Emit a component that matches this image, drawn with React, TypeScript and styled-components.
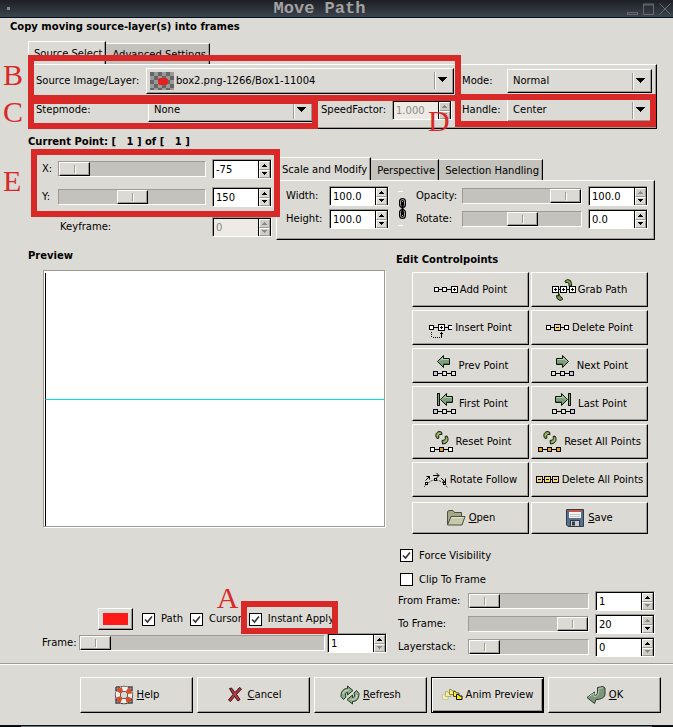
import React, { useId } from "react";
import styled, { createGlobalStyle, css } from "styled-components";

const face = "#dcdad5";
const shade = "#9d9b93";
const trough = "#c4c2bd";
const marker = "#d92828";

const GlobalStyle = createGlobalStyle`
  * { box-sizing: border-box; }
  body { margin: 0; background: ${face}; }
  body, button, input, select {
    font-family: "DejaVu Sans", sans-serif;
    font-size: 10px;
    line-height: 12px;
    color: #000;
  }
`;

const bevel = css`
  border: 1px solid;
  border-color: #fff #000 #000 #fff;
  box-shadow: inset -1px -1px 0 ${shade};
`;

/* ---------- window frame ---------- */

const Dialog = styled.main`
  display: flex;
  flex-direction: column;
  background: ${face};
  overflow: hidden;
`;

const TitleBar = styled.header`
  display: grid;
  grid-template-columns: 18px 1fr 52px;
  align-items: center;
  height: 18px;
  background: linear-gradient(#1e1f24, #3b444f);
  border-bottom: 1px solid #06131f;
`;

const TitleDot = styled.span`
  width: 3px;
  height: 3px;
  margin-left: 7px;
  background: #8a8a8a;
`;

const Title = styled.h1`
  margin: 0;
  font: bold 17px/17px "Liberation Mono", monospace;
  text-align: center;
  color: #a2a2a2;
`;

const TitleButtons = styled.div`
  display: flex;
  gap: 4px;
  padding-left: 6px;
`;

const TitleButton = styled.button`
  display: flex;
  padding: 0;
  border: 0;
  background: none;
`;

const FooterEdge = styled.div`
  height: 2px;
  background: linear-gradient(90deg, #06080c 21px, #6b7075 21px, #6b7075 calc(100% - 21px), #06080c calc(100% - 21px));
  border-top: 1px solid #06131f;
`;

const Heading = styled.h2<{ $top?: number; $left?: number }>`
  margin: ${(p) => p.$top ?? 0}px 0 0 ${(p) => p.$left ?? 0}px;
  font-size: 10px;
  line-height: 12px;
  font-weight: bold;
  white-space: pre;
`;

/* ---------- notebook ---------- */

const Tabs = styled.div`
  display: flex;
  align-items: flex-end;
`;

const Tab = styled.button<{ $active?: boolean }>`
  height: ${(p) => (p.$active ? 23 : 21)}px;
  padding: 1px 3px 0 5px;
  border: 1px solid;
  border-color: #fff #000 ${(p) => (p.$active ? face : "#fff")} ${(p) => (p.$active ? "#fff" : trough)};
  border-bottom: 0;
  background: ${(p) => (p.$active ? face : trough)};
  box-shadow: inset -1px 0 0 ${shade};
  white-space: nowrap;
`;

const SourceBook = styled.section`
  margin: 8px 16px 0 28px;
`;

const SourcePage = styled.div`
  ${bevel}
  display: flex;
  flex-direction: column;
  gap: 4px;
  padding: 3px 4px 6px 7px;
`;

const SourceRow = styled.div`
  display: flex;
  gap: 8px;
`;

const SourceMain = styled.div<{ $end?: number }>`
  position: relative;
  display: flex;
  align-items: center;
  gap: 8px;
  flex: 1 1 418px;
  min-width: 0;
  padding-right: ${(p) => p.$end ?? 0}px;
`;

const SourceSide = styled.div`
  position: relative;
  display: flex;
  align-items: center;
  flex: 1 1 190px;
  min-width: 0;
`;

const Field = styled.div`
  position: relative;
  display: flex;
  align-items: center;
  flex: 1;
`;

const Label = styled.label<{ $width?: number; $indent?: number }>`
  flex: none;
  width: ${(p) => (p.$width ? `${p.$width}px` : "auto")};
  padding-left: ${(p) => p.$indent ?? 0}px;
  white-space: nowrap;
`;

/* ---------- drop-down ---------- */

const ComboBox = styled.div`
  position: relative;
  flex: 1;
  min-width: 0;
  display: flex;
`;

const ComboSelect = styled.select<{ $picture?: boolean; $tall?: boolean }>`
  ${bevel}
  appearance: none;
  width: 100%;
  height: ${(p) => (p.$tall ? 26 : 24)}px;
  padding: 0 24px 0 ${(p) => (p.$picture ? 29 : 5)}px;
  border-radius: 0;
  background: ${face};
`;

const ComboArrow = styled.svg`
  position: absolute;
  right: 4px;
  top: 4px;
  pointer-events: none;
`;

const ComboPicture = styled.svg`
  position: absolute;
  left: 4px;
  top: 4px;
  pointer-events: none;
`;

/* ---------- number box ---------- */

const SpinFrame = styled.div`
  display: grid;
  grid-template-columns: 1fr 13px;
  flex: none;
  width: 60px;
  height: 20px;
  border: 1px solid;
  border-color: ${shade} #fff #fff ${shade};
`;

const SpinInput = styled.input`
  min-width: 0;
  width: 100%;
  padding: 0 2px;
  border: solid #000;
  border-width: 1px 0 0 1px;
  border-radius: 0;
  background: #fff;
  &:disabled { background: #eeebe7; color: #8b8983; }
`;

const SpinButtons = styled.div`
  display: grid;
  grid-template-rows: 1fr 1fr;
  border: solid #000;
  border-width: 1px 1px 0 1px;
`;

const SpinButton = styled.button`
  display: flex;
  align-items: center;
  justify-content: center;
  min-height: 0;
  padding: 0;
  border: 1px solid;
  border-color: #fff ${shade} ${shade} #fff;
  background: ${face};
  color: #000;
  &:disabled { color: #8b8983; background: #cfcdc8; }
`;

/* ---------- slider ---------- */

const Slider = styled.input.attrs({ type: "range" })`
  appearance: none;
  flex: 1;
  min-width: 0;
  height: 16px;
  margin: 0;
  border: 1px solid;
  border-color: ${shade} #fff #fff ${shade};
  background: ${trough};
  &::-webkit-slider-thumb {
    ${bevel}
    appearance: none;
    width: 31px;
    height: 14px;
    background:
      linear-gradient(${shade}, ${shade}) 14px 2px / 1px 8px no-repeat,
      linear-gradient(#fff, #fff) 15px 3px / 1px 8px no-repeat,
      ${face};
  }
`;

/* ---------- tick box ---------- */

const CheckLabel = styled.label`
  position: relative;
  display: flex;
  align-items: center;
  gap: 6px;
  height: 13px;
  white-space: nowrap;
`;

const CheckInput = styled.input.attrs({ type: "checkbox" })`
  appearance: none;
  width: 13px;
  height: 13px;
  margin: 0;
  border: 1px solid #000;
  background: #fff;
  &:checked {
    background: #fff url("data:image/svg+xml,%3Csvg xmlns='http://www.w3.org/2000/svg' width='11' height='11'%3E%3Cpath d='M2 5.5 4.5 8 9 2.5' fill='none' stroke='%23333' stroke-width='1.6'/%3E%3C/svg%3E") center no-repeat;
  }
`;

/* ---------- current point ---------- */

const PointRow = styled.section`
  display: flex;
  align-items: flex-start;
  gap: 4px;
  margin: 9px 18px 0 42px;
`;

const PointFields = styled.div`
  display: flex;
  flex-direction: column;
  gap: 10px;
  flex: 1 1 230px;
  min-width: 0;
  padding-top: 2px;
`;

const PositionFields = styled.div`
  position: relative;
  display: flex;
  flex-direction: column;
  gap: 8px;
`;

const Line = styled.div<{ $gap?: number }>`
  display: flex;
  align-items: center;
  gap: ${(p) => p.$gap ?? 6}px;
`;

const SpreadLine = styled(Line)`
  justify-content: space-between;
`;

const LabelledSlider = styled.div`
  display: flex;
  align-items: center;
  flex: 1;
  min-width: 0;
`;

const ModifyBook = styled.section`
  flex: 1 1 379px;
  min-width: 0;
`;

const ModifyPage = styled.div`
  ${bevel}
  display: flex;
  padding: 5px 6px 10px 9px;
`;

const Stack = styled.div<{ $grow?: boolean }>`
  display: flex;
  flex-direction: column;
  gap: 3px;
  flex: ${(p) => (p.$grow ? "1" : "none")};
  min-width: 0;
`;

const ChainButton = styled.button`
  display: flex;
  flex: none;
  align-items: center;
  width: 27px;
  padding: 0 8px;
  border: 0;
  background: none;
`;

/* ---------- lower area ---------- */

const Workspace = styled.div`
  display: flex;
  gap: 5px;
  margin: 10px 17px 0 28px;
`;

const PreviewColumn = styled.section`
  display: flex;
  flex-direction: column;
  flex: 1 1 363px;
  min-width: 0;
  padding: 0 4px 4px 0;
`;

const Canvas = styled.div`
  display: grid;
  grid-template-rows: 129px 1fr;
  height: 257px;
  margin: 8px 2px 0 15px;
  padding: 0 0 0 1px;
  border: 1px solid;
  border-color: ${shade};
  background: #fff;
  box-shadow: 1px 1px 0 #fff;
`;

const CanvasUpper = styled.div`
  margin-top: 2px;
  border-left: 1px solid #000;
  border-bottom: 1px solid #00e0e0;
`;

const CanvasLower = styled.div`
  border-left: 1px solid #000;
`;

const PreviewControls = styled.div`
  display: flex;
  flex-direction: column;
  gap: 3px;
  margin-top: auto;
  padding-left: 14px;
`;

const PreviewOptions = styled.div`
  display: flex;
  align-items: center;
  gap: 7px;
  padding-left: 56px;
`;

const ColorButton = styled.button`
  ${bevel}
  width: 35px;
  height: 22px;
  margin-right: 2px;
  padding: 4px;
  background: ${face};
`;

const Swatch = styled.span`
  display: block;
  height: 12px;
  background: #ff1a1a;
`;

const EditColumn = styled.section`
  flex: 1 1 260px;
  min-width: 0;
  padding-top: 4px;
`;

const ButtonGrid = styled.div<{ $top: number; $row: number }>`
  display: grid;
  grid-template-columns: 1fr 1fr;
  grid-auto-rows: ${(p) => p.$row}px;
  gap: 3px 2px;
  margin: ${(p) => p.$top}px 8px 0 16px;
`;

const PushButton = styled.button<{ $default?: boolean; $gap?: number }>`
  ${bevel}
  display: flex;
  align-items: center;
  justify-content: center;
  gap: ${(p) => p.$gap ?? 2}px;
  min-width: 0;
  padding: 0;
  background: ${face};
  white-space: nowrap;
  ${(p) =>
    p.$default &&
    css`
      border-color: #000;
      box-shadow: inset 1px 1px 0 #fff, inset -1px -1px 0 #000, inset -2px -2px 0 ${shade};
    `}
`;

const CheckList = styled.div`
  display: flex;
  flex-direction: column;
  gap: 11px;
  margin: 15px 0 5px 4px;
`;

const RangeList = styled.div`
  display: flex;
  flex-direction: column;
  gap: 3px;
  margin: 0 1px 0 2px;
`;

const Rule = styled.hr`
  width: 100%;
  height: 2px;
  margin: 6px 0 12px;
  border: 0;
  background: linear-gradient(${shade} 1px, #fff 1px);
`;

const Actions = styled.footer`
  display: grid;
  grid-template-columns: repeat(5, 1fr);
  grid-auto-rows: 36px;
  gap: 4px;
  padding: 0 12px 12px 80px;
`;

/* ---------- callouts ---------- */

const CalloutFrame = styled.div<{ $inset: string }>`
  position: absolute;
  inset: ${(p) => p.$inset};
  z-index: 2;
  border: 6px solid ${marker};
  pointer-events: none;
`;

const CalloutLetter = styled.span<{ $left: number; $top: number }>`
  position: absolute;
  left: ${(p) => p.$left}px;
  top: ${(p) => p.$top}px;
  font: 30px/30px "Liberation Serif", serif;
  color: ${marker};
`;

function Callout({ letter, inset, left, top }: { letter: string; inset: string; left: number; top: number }) {
  return (
    <CalloutFrame $inset={inset}>
      <CalloutLetter $left={left} $top={top}>{letter}</CalloutLetter>
    </CalloutFrame>
  );
}

/* ---------- composed controls ---------- */

function Combo({ id, value, picture, tall }: { id: string; value: string; picture?: boolean; tall?: boolean }) {
  return (
    <ComboBox>
      <ComboSelect id={id} $picture={picture} $tall={tall}>
        <option>{value}</option>
      </ComboSelect>
      {picture && (
        <ComboPicture width="24" height="18" shapeRendering="crispEdges" aria-hidden>
          <rect width="24" height="18" fill="#666" />
          {[0, 1, 2, 3, 4].map((r) =>
            [0, 1, 2, 3, 4, 5].map((c) =>
              (r + c) % 2 ? <rect key={`${r}${c}`} x={c * 4} y={r * 4} width="4" height="4" fill="#999" /> : null
            )
          )}
          <path d="M9 6h8v1h1v5h-1v1H9v-1H8V7h1z" fill="#e42222" />
        </ComboPicture>
      )}
      <ComboArrow width="16" height="17" shapeRendering="crispEdges" aria-hidden>
        <path d="M.5 0v17" stroke={shade} />
        <path d="M1.5 0v17" stroke="#fff" />
        <path d="M4 5h9v1h-1v1h-1v1h-1v1h-1v1H8V9H7V8H6V7H5V6H4z" fill="#000" />
      </ComboArrow>
    </ComboBox>
  );
}

type SpinProps = { id?: string; name: string; value: string; disabled?: boolean; atMin?: boolean; atMax?: boolean };

function Spin({ id, name, value, disabled, atMin, atMax }: SpinProps) {
  return (
    <SpinFrame>
      <SpinInput id={id} aria-label={name} defaultValue={value} disabled={disabled} />
      <SpinButtons>
        <SpinButton aria-label={`Increase ${name}`} disabled={disabled || atMax}>
          <svg width="5" height="3" shapeRendering="crispEdges"><path d="M2 0h1v1h1v1h1v1H0V2h1V1h1z" fill="currentColor" /></svg>
        </SpinButton>
        <SpinButton aria-label={`Decrease ${name}`} disabled={disabled || atMin}>
          <svg width="5" height="3" shapeRendering="crispEdges"><path d="M0 0h5v1H4v1H3v1H2V2H1V1H0z" fill="currentColor" /></svg>
        </SpinButton>
      </SpinButtons>
    </SpinFrame>
  );
}

type ScaleProps = { label: string; labelWidth: number; at: number; value: string; gap?: number; atMin?: boolean; atMax?: boolean };

function Scale({ label, labelWidth, at, value, gap, atMin, atMax }: ScaleProps) {
  const id = useId();
  return (
    <Line $gap={gap}>
      <LabelledSlider>
        <Label htmlFor={id} $width={labelWidth}>{label}</Label>
        <Slider id={id} defaultValue={at} />
      </LabelledSlider>
      <Spin name={label} value={value} atMin={atMin} atMax={atMax} />
    </Line>
  );
}

function Check({ label, checked, children }: { label: string; checked?: boolean; children?: React.ReactNode }) {
  return (
    <CheckLabel>
      <CheckInput defaultChecked={checked} />
      {label}
      {children}
    </CheckLabel>
  );
}

/* ---------- icons ---------- */

function Node({ x, y, fill = "#fff", sign }: { x: number; y: number; fill?: string; sign?: "+" | "-" }) {
  const s = sign ? 7 : 5;
  return (
    <g shapeRendering="crispEdges">
      <rect x={x} y={y} width={s} height={s} fill="#000" />
      <rect x={x + 1} y={y + 1} width={s - 2} height={s - 2} fill={fill} />
      {sign && <rect x={x + 2} y={y + 3} width="3" height="1" />}
      {sign === "+" && <rect x={x + 3} y={y + 2} width="1" height="3" />}
    </g>
  );
}

const Glyph = ({ children, w = 24, h = 24 }: { children: React.ReactNode; w?: number; h?: number }) => (
  <svg width={w} height={h} viewBox={`0 0 ${w} ${h}`} aria-hidden>{children}</svg>
);

const Wire = ({ y, x = 2, to = 20 }: { y: number; x?: number; to?: number }) => (
  <rect x={x} y={y} width={to - x} height="1" shapeRendering="crispEdges" />
);

const Trio = ({ fills, y = 17 }: { fills: string[]; y?: number }) => (
  <>
    <Wire y={y + 2} />
    {fills.map((f, i) => <Node key={i} x={i * 9} y={y} fill={f} />)}
  </>
);

const Arrow = ({ flip, x = 4 }: { flip?: boolean; x?: number }) => (
  <g transform={flip ? `translate(${x + 13} 1) scale(-1 1)` : `translate(${x} 1)`}>
    <path d="M.5 6.5 6.5.5V3.5H12.5V9.5H6.5V12.5Z" fill="#7f9f7c" stroke="#0c160c" />
    <path d="M2 6.5 5.5 3V4.5H11.5" fill="none" stroke="#bdd0b8" />
    <path d="M6 8.5H12" stroke="#58785a" />
  </g>
);

const Swirls = () => (
  <g stroke="#15200a" fill="#7e9d52" strokeLinejoin="round">
    <path d="M7 8.5C5 6 5.5 2.5 9 1.500L11.500 2 12 4.500 9.500 4.500C8.500 5.500 8.500 6.500 9 8Z" />
    <path d="M12 10.500 14.500 10C15.500 9 15.500 8 15 6.500L17 6C19 9 18 12.500 15 13.500L12.500 14Z" />
    <path d="M7.500 6C7.500 4.500 8.500 3.200 10.500 3.200" fill="none" stroke="#b7cc8e" />
    <path d="M13.500 12.300C15.500 12 16.700 10.500 16.700 8.500" fill="none" stroke="#b7cc8e" />
  </g>
);

const blue = "#c9c8ea";
const mint = "#dcebe0";
const amber = "#eda21f";
const gold = "#f7d777";

const AddIcon = () => <Glyph><Wire y={11} /><Node x={0} y={9} /><Node x={8} y={9} /><Node x={17} y={8} sign="+" /></Glyph>;
const GrabIcon = () => (
  <Glyph>
    <Wire y={11} />
    <g fill="#7e9d52" stroke="#15200a" strokeLinejoin="round">
      <path d="M13.500 4.500 13 3 15.500 1.500 18.500 2.500 19.500 5.500 19.500 8 17 8 17 5.500 15.500 4.500Z" />
      <path d="M6.500 15V18L4.500 17.500 5 20.500 8 22.500 10.500 21.500 10 19.500 8.500 19Z" />
    </g>
    <Node x={0} y={8} sign="+" /><Node x={8} y={8} sign="+" /><Node x={17} y={8} sign="+" />
  </Glyph>
);
const InsertIcon = () => (
  <Glyph>
    <Wire y={11} /><Node x={0} y={9} /><Node x={9} y={8} sign="+" />
    <g shapeRendering="crispEdges">
      <rect x="19" y="9" width="4" height="5" /><rect x="20" y="10" width="3" height="3" fill="#fff" />
      <path d="M2.5 16v6M4 21.5h9" stroke="#000" strokeDasharray="1 1" fill="none" />
      <path d="M12.5 16v5M11 17.5h3" stroke="#000" />
    </g>
  </Glyph>
);
const DeleteIcon = () => <Glyph><Wire y={11} /><Node x={0} y={9} /><Node x={8} y={8} fill={gold} sign="-" /><Node x={18} y={9} /></Glyph>;
const PrevIcon = () => <Glyph><Arrow /><Trio fills={[blue, mint, mint]} /></Glyph>;
const NextIcon = () => <Glyph><Arrow flip x={5} /><Trio fills={[mint, mint, blue]} /></Glyph>;
const FirstIcon = () => <Glyph><rect x="4.5" y="1.5" width="2" height="12" fill="#7f9f7c" stroke="#0c160c" /><Arrow x={7} /><Trio fills={[blue, mint, mint]} /></Glyph>;
const LastIcon = () => <Glyph><rect x="16.5" y="1.5" width="2" height="12" fill="#7f9f7c" stroke="#0c160c" /><Arrow flip x={3} /><Trio fills={[mint, mint, blue]} /></Glyph>;
const ResetIcon = () => <Glyph><Swirls /><Trio fills={["#fff", amber, "#fff"]} /></Glyph>;
const ResetAllIcon = () => <Glyph><Swirls /><Trio fills={[amber, amber, amber]} /></Glyph>;
const RotateIcon = () => (
  <Glyph>
    <path d="M0 19 3 15.500 7 13 11 11.500 16 13 21 15.500 22 18 24 19.500" fill="none" stroke="#444" strokeDasharray="2 1" />
    <g fill="#fff" stroke="#000">
      <rect x="1.500" y="14.500" width="2" height="2" />
      <rect x="10.500" y="10.500" width="2" height="2" />
      <rect x="19.500" y="14.500" width="2" height="2" />
    </g>
    <g stroke="#000" fill="none">
      <path d="M1.500 12.500 5.500 8.500M2.500 8.500h3v3" />
      <path d="M9 7.500h6M12.500 5l2.500 2.500-2.500 2.500" />
      <path d="M17 10l4 4M21.500 10.500v3.500h-3" />
    </g>
  </Glyph>
);
const DeleteAllIcon = () => <Glyph><Wire y={11} /><Node x={0} y={8} fill={gold} sign="-" /><Node x={8} y={8} fill={gold} sign="-" /><Node x={16} y={8} fill={gold} sign="-" /></Glyph>;

const FolderIcon = () => (
  <Glyph w={20} h={18}>
    <path d="M1.5 15.500V2.500L3 1.500H7L8.500 3.500H15.500V7" fill="#a3a888" stroke="#4d503c" />
    <path d="M1.500 16 5 7.500H19L16 16Z" fill="#c6caaa" stroke="#4d503c" />
    <path d="M5.800 8.600H17.500" stroke="#e6e8d4" />
  </Glyph>
);
const FloppyIcon = () => (
  <Glyph w={18} h={18}>
    <path d="M.5.5H17.500V17.500H2L.5 16Z" fill="#53718f" stroke="#333a42" />
    <rect x="3" y="1" width="12" height="8" fill="#f4f4f2" />
    <rect x="3" y="1" width="12" height="2" fill="#cf5448" />
    <path d="M4 5.500h10M4 7.500h10" stroke="#c7c7c7" />
    <rect x="4.500" y="11.500" width="9" height="6" fill="#c9ccce" stroke="#333a42" />
    <rect x="6" y="12.500" width="3" height="4" fill="#33414f" />
  </Glyph>
);
const LifebuoyIcon = () => (
  <Glyph w={20} h={20}>
    <path d="M2 2h4M14 2h4v4M2 2v4M2 14v4h4M18 14v4h-4" stroke="#454545" strokeWidth="1.500" fill="none" />
    <circle cx="10" cy="10" r="6.200" fill="none" stroke="#3d3836" strokeWidth="6" />
    <circle cx="10" cy="10" r="6.200" fill="none" stroke="#f1efec" strokeWidth="4.400" />
    <circle cx="10" cy="10" r="6.200" fill="none" stroke="#dd4a28" strokeWidth="4.400" strokeDasharray="4.870 4.870" strokeDashoffset="-2.435" />
  </Glyph>
);
const CrossIcon = () => (
  <Glyph w={18} h={20}>
    <path d="M3.500 3.500 5.500 3 9 7.500 13.500 2.500 15.500 4 10.500 9.500 14 14.500 12 16 8.500 11.500 4.500 16.500 2.500 15 7 9.500Z" fill="#b43a44" stroke="#3a0c10" />
  </Glyph>
);
const RefreshIcon = () => (
  <Glyph w={20} h={20}>
    <g fill="#8fae8d" stroke="#223a22">
      <path d="M1 11.500C1 5.500 4 3.500 7.500 3.500V1L13 5.500 7.500 10V7.500C5.500 7.500 5 9 6 12L3.500 14.500Z" />
      <path d="M19 8.500C19 14.500 16 16.500 12.500 16.500V19L7 14.500 12.500 10V12.500C14.500 12.500 15 11 14 8L16.500 5.500Z" />
    </g>
    <path d="M3 9C3.500 6.500 5 5 8.500 5" stroke="#d3e2d0" fill="none" />
    <path d="M17 10C17 13 15 14.500 11.500 14.700" stroke="#d3e2d0" fill="none" />
  </Glyph>
);
const AnimIcon = () => (
  <Glyph w={21} h={18}>
    {[
      [0.5, 8.5, "#f2efb6", "#c9c8a4"],
      [3.5, 5.5, "#f4ef98", "#b2b184"],
      [7.5, 3.5, "#f5ee70", "#8e8d50"],
      [11.5, 5.5, "#f8ee3c", "#4b4a20"],
      [14.5, 8.500, "#fff000", "#000"],
    ].map(([x, y, f, s]) => (
      <path key={x} transform={`translate(${x} ${y})`} d="M0 5V0H2L3 1.500H5.500V5Z" fill={f as string} stroke={s as string} />
    ))}
  </Glyph>
);
const EnterIcon = () => (
  <Glyph w={20} h={20}>
    <path d="M11.500 2.500 17 1.500 19 3V9C19 12 16 14.500 10 14.500L8.500 18.500 1 12.500 8.500 7V10.500C11 10.500 11.500 9 11.500 7Z" fill="#7d967b" stroke="#2c3b2b" />
    <path d="M2.500 12 8 8V11.500C12 11.500 12.800 9 12.800 3.500L17 2.700" stroke="#bccdb9" fill="none" />
  </Glyph>
);

const ChainIcon = () => (
  <svg width="11" height="36" viewBox="0 0 11 36" aria-hidden>
    <path d="M1 1.500h5M1 35.500h5" stroke="#fff" />
    <g fill="none">
      <rect x="3.500" y="9.500" width="4" height="7" rx="2" stroke="#000" strokeWidth="3" />
      <rect x="3.500" y="20.500" width="4" height="7" rx="2" stroke="#000" strokeWidth="3" />
      <rect x="3.500" y="9.500" width="4" height="7" rx="2" stroke="#aaa" />
      <rect x="3.500" y="20.500" width="4" height="7" rx="2" stroke="#aaa" />
      <path d="M5.500 12v13" stroke="#000" strokeWidth="2" />
    </g>
  </svg>
);

const editButtons: [string, () => React.ReactElement][] = [
  ["Add Point", AddIcon],
  ["Grab Path", GrabIcon],
  ["Insert Point", InsertIcon],
  ["Delete Point", DeleteIcon],
  ["Prev Point", PrevIcon],
  ["Next Point", NextIcon],
  ["First Point", FirstIcon],
  ["Last Point", LastIcon],
  ["Reset Point", ResetIcon],
  ["Reset All Points", ResetAllIcon],
  ["Rotate Follow", RotateIcon],
  ["Delete All Points", DeleteAllIcon],
];

export default function App() {
  return (
    <>
      <GlobalStyle />
      <Dialog>
        <TitleBar>
          <TitleDot />
          <Title>Move Path</Title>
          <TitleButtons>
            <TitleButton aria-label="Minimize"><svg width="12" height="12"><rect x=".5" y="9.500" width="10" height="2" fill="none" stroke="#686b70" /></svg></TitleButton>
            <TitleButton aria-label="Maximize"><svg width="12" height="12"><path d="M.5 1h10v10.500H.5zM.5 2h10" fill="none" stroke="#686b70" /></svg></TitleButton>
            <TitleButton aria-label="Close"><svg width="12" height="12"><path d="M.5.5l11 11M11.500.5l-11 11" stroke="#686b70" /></svg></TitleButton>
          </TitleButtons>
        </TitleBar>

        <Heading $top={3} $left={10}>Copy moving source-layer(s) into frames</Heading>

        <SourceBook>
          <Tabs role="tablist">
            <Tab role="tab" aria-selected $active>Source Select</Tab>
            <Tab role="tab" aria-selected={false}>Advanced Settings</Tab>
          </Tabs>
          <SourcePage>
            <SourceRow>
              <SourceMain>
                <Field>
                  <Label htmlFor="source" $width={110}>Source Image/Layer:</Label>
                  <Combo id="source" value="box2.png-1266/Box1-11004" picture tall />
                </Field>
                <Callout letter="B" inset="-13px -7px -7px -8px" left={-31} top={-1} />
              </SourceMain>
              <SourceSide>
                <Label htmlFor="mode" $width={45}>Mode:</Label>
                <Combo id="mode" value="Normal" />
              </SourceSide>
            </SourceRow>
            <SourceRow>
              <SourceMain $end={2}>
                <Field>
                  <Label htmlFor="stepmode" $width={112}>Stepmode:</Label>
                  <Combo id="stepmode" value="None" />
                  <Callout letter="C" inset="0 -5px -7px -8px" left={-31} top={-7} />
                </Field>
                <Line $gap={0}>
                  <Label htmlFor="speed" $width={71}>SpeedFactor:</Label>
                  <Spin id="speed" name="SpeedFactor" value="1.000" disabled />
                </Line>
              </SourceMain>
              <SourceSide>
                <Label htmlFor="handle" $width={45}>Handle:</Label>
                <Combo id="handle" value="Center" />
                <Callout letter="D" inset="-4px -4px -5px -7px" left={-33} top={6} />
              </SourceSide>
            </SourceRow>
          </SourcePage>
        </SourceBook>

        <Heading $top={7} $left={28}>{"Current Point: [   1 ] of [   1 ]"}</Heading>

        <PointRow>
          <PointFields>
            <PositionFields>
              <Scale label="X:" labelWidth={16} at={0} value="-75" />
              <Scale label="Y:" labelWidth={16} at={50} value="150" />
              <Callout letter="E" inset="-10px -8px -10px -11px" left={-34} top={11} />
            </PositionFields>
            <SpreadLine>
              <Label htmlFor="keyframe" $indent={18}>Keyframe:</Label>
              <Spin id="keyframe" name="Keyframe" value="0" disabled />
            </SpreadLine>
          </PointFields>
          <ModifyBook>
            <Tabs role="tablist">
              <Tab role="tab" aria-selected $active>Scale and Modify</Tab>
              <Tab role="tab" aria-selected={false}>Perspective</Tab>
              <Tab role="tab" aria-selected={false}>Selection Handling</Tab>
            </Tabs>
            <ModifyPage>
              <Stack>
                <Line $gap={0}>
                  <Label htmlFor="width" $width={43}>Width:</Label>
                  <Spin id="width" name="Width" value="100.0" />
                </Line>
                <Line $gap={0}>
                  <Label htmlFor="height" $width={43}>Height:</Label>
                  <Spin id="height" name="Height" value="100.0" />
                </Line>
              </Stack>
              <ChainButton aria-label="Link width and height"><ChainIcon /></ChainButton>
              <Stack $grow>
                <Scale label="Opacity:" labelWidth={46} at={100} value="100.0" atMax />
                <Scale label="Rotate:" labelWidth={46} at={50} value="0.0" />
              </Stack>
            </ModifyPage>
          </ModifyBook>
        </PointRow>

        <Workspace>
          <PreviewColumn>
            <Heading>Preview</Heading>
            <Canvas><CanvasUpper /><CanvasLower /></Canvas>
            <PreviewControls>
              <PreviewOptions>
                <ColorButton aria-label="Path color"><Swatch /></ColorButton>
                <Check label="Path" checked />
                <Check label="Cursor" checked />
                <Check label="Instant Apply" checked>
                  <Callout letter="A" inset="-12px -4px -8px -8px" left={-30} top={-24} />
                </Check>
              </PreviewOptions>
              <Scale label="Frame:" labelWidth={37} at={0} value="1" gap={2} atMin />
            </PreviewControls>
          </PreviewColumn>

          <EditColumn>
            <Heading>Edit Controlpoints</Heading>
            <ButtonGrid $top={6} $row={35}>
              {editButtons.map(([text, Icon]) => (
                <PushButton key={text}><Icon />{text}</PushButton>
              ))}
            </ButtonGrid>
            <ButtonGrid $top={5} $row={32}>
              <PushButton $gap={3}><FolderIcon /><span><u>O</u>pen</span></PushButton>
              <PushButton $gap={4}><FloppyIcon /><span><u>S</u>ave</span></PushButton>
            </ButtonGrid>
            <CheckList>
              <Check label="Force Visibility" checked />
              <Check label="Clip To Frame" />
            </CheckList>
            <RangeList>
              <Scale label="From Frame:" labelWidth={70} at={0} value="1" atMin />
              <Scale label="To Frame:" labelWidth={70} at={100} value="20" atMax />
              <Scale label="Layerstack:" labelWidth={70} at={0} value="0" atMin />
            </RangeList>
          </EditColumn>
        </Workspace>

        <Rule />

        <Actions>
          <PushButton $gap={3}><LifebuoyIcon /><span><u>H</u>elp</span></PushButton>
          <PushButton $gap={4}><CrossIcon /><span><u>C</u>ancel</span></PushButton>
          <PushButton $gap={3}><RefreshIcon /><span><u>R</u>efresh</span></PushButton>
          <PushButton $default $gap={3}><AnimIcon />Anim Preview</PushButton>
          <PushButton $gap={3}><EnterIcon /><span><u>O</u>K</span></PushButton>
        </Actions>
        <FooterEdge />
      </Dialog>
    </>
  );
}
